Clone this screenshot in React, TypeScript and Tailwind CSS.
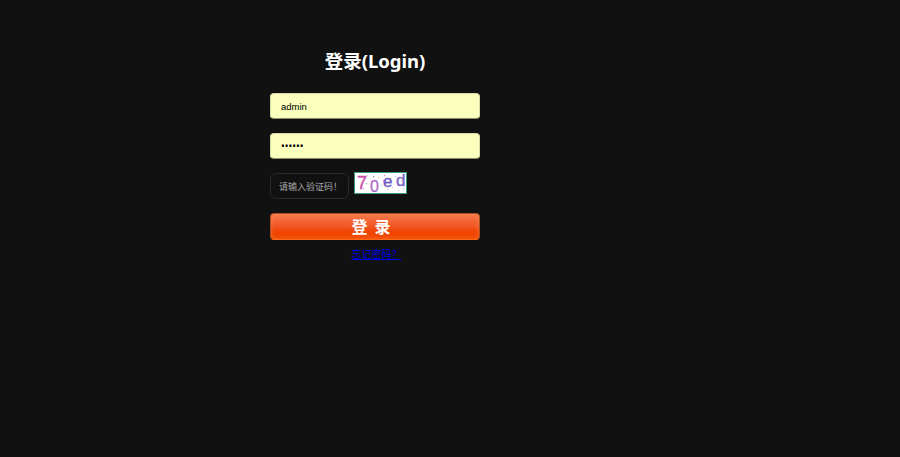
import React from 'react';

const fontStack = { fontFamily: '"Noto Sans", "Noto Sans CJK SC", sans-serif' };

// noise dots for the captcha picture
const noise = [
    [4, 4, '#7dd'], [9, 16, '#e9c'], [13, 3, '#9c9'], [17, 9, '#c9e'], [21, 18, '#8cf'], [24, 5, '#fc9'],
    [27, 13, '#9dd'], [30, 3, '#e8b'], [33, 17, '#bbe'], [36, 6, '#9c9'], [38, 15, '#fbd'], [41, 4, '#8de'],
    [44, 18, '#cce'], [47, 8, '#ebc'], [49, 16, '#9de'], [19, 4, '#888'], [12, 11, '#aaa'], [29, 8, '#c8e'],
];

function Captcha() {
    return (
        <svg width="53" height="22" viewBox="0 0 53 22" className="block shrink-0">
            <rect x="0.5" y="0.5" width="52" height="21" fill="#ffffff" stroke="#3a9a80" />
            {noise.map(([x, y, c], i) => (
                <rect key={i} x={x as number} y={y as number} width="1.2" height="1.2" fill={c as string} />
            ))}
            <text x="3" y="17" fontSize="18" fill="#c94fa8" stroke="#c94fa8" strokeWidth="0.4" fontFamily="Liberation Sans">7</text>
            <text x="16" y="20" fontSize="16" fill="#b06ac8" stroke="#b06ac8" strokeWidth="0.3" fontFamily="Liberation Sans">0</text>
            <text x="29" y="15" fontSize="17" fill="#6f58c0" stroke="#6f58c0" strokeWidth="0.4" fontFamily="Liberation Sans">e</text>
            <text x="42" y="14" fontSize="17" fill="#7a68c4" stroke="#7a68c4" strokeWidth="0.4" fontFamily="Liberation Sans">d</text>
        </svg>
    );
}

export default function App() {
    return (
        <div className="w-[900px] h-[457px] bg-[#111111] overflow-hidden" style={fontStack}>
            <div className="w-[210px] ml-[270px] pt-[49px] flex flex-col">
                <h1 className="h-[24px] leading-[24px] text-[18.5px] font-bold text-white text-center whitespace-nowrap">
                    登录(Login)
                </h1>

                <input
                    readOnly
                    value="admin"
                    className="mt-[20px] h-[26px] px-[10px] text-[9.5px] font-['Liberation_Sans'] text-black bg-[#fbffbd] border border-[#d8dba6] border-b-[#8a8c70] rounded-[4px] outline-none"
                />
                <input
                    readOnly
                    type="password"
                    value="123456"
                    className="mt-[14px] h-[26px] px-[10px] text-[10px] text-black bg-[#fbffbd] border border-[#d8dba6] border-b-[#8a8c70] rounded-[4px] outline-none"
                />

                <div className="mt-[13px] flex items-start gap-[5px]">
                    <div className="mt-[1px] w-[79px] h-[26px] pt-[2px] pl-[2px] flex items-center justify-center text-[9px] text-[#a8a8a8] bg-[#111111] border border-[#2a2a2a] rounded-[6px] whitespace-nowrap">
                        请输入验证码！
                    </div>
                    <Captcha />
                </div>

                <button className="mt-[14px] h-[27px] pr-[8px] text-[16px] leading-none font-bold text-white [word-spacing:3px] rounded-[4px] border border-[#a8501f] border-b-[#ff6a10] bg-gradient-to-b from-[#f4784a] to-[#f04500] to-[70%] shadow-[inset_0_0_5px_rgba(255,150,100,0.45)]">
                    登 录
                </button>

                <a href="#" className="mt-[7px] pl-[3px] text-center text-[10px] leading-[14px] text-[#0000ee] underline">
                    忘记密码？
                </a>
            </div>
        </div>
    );
}
